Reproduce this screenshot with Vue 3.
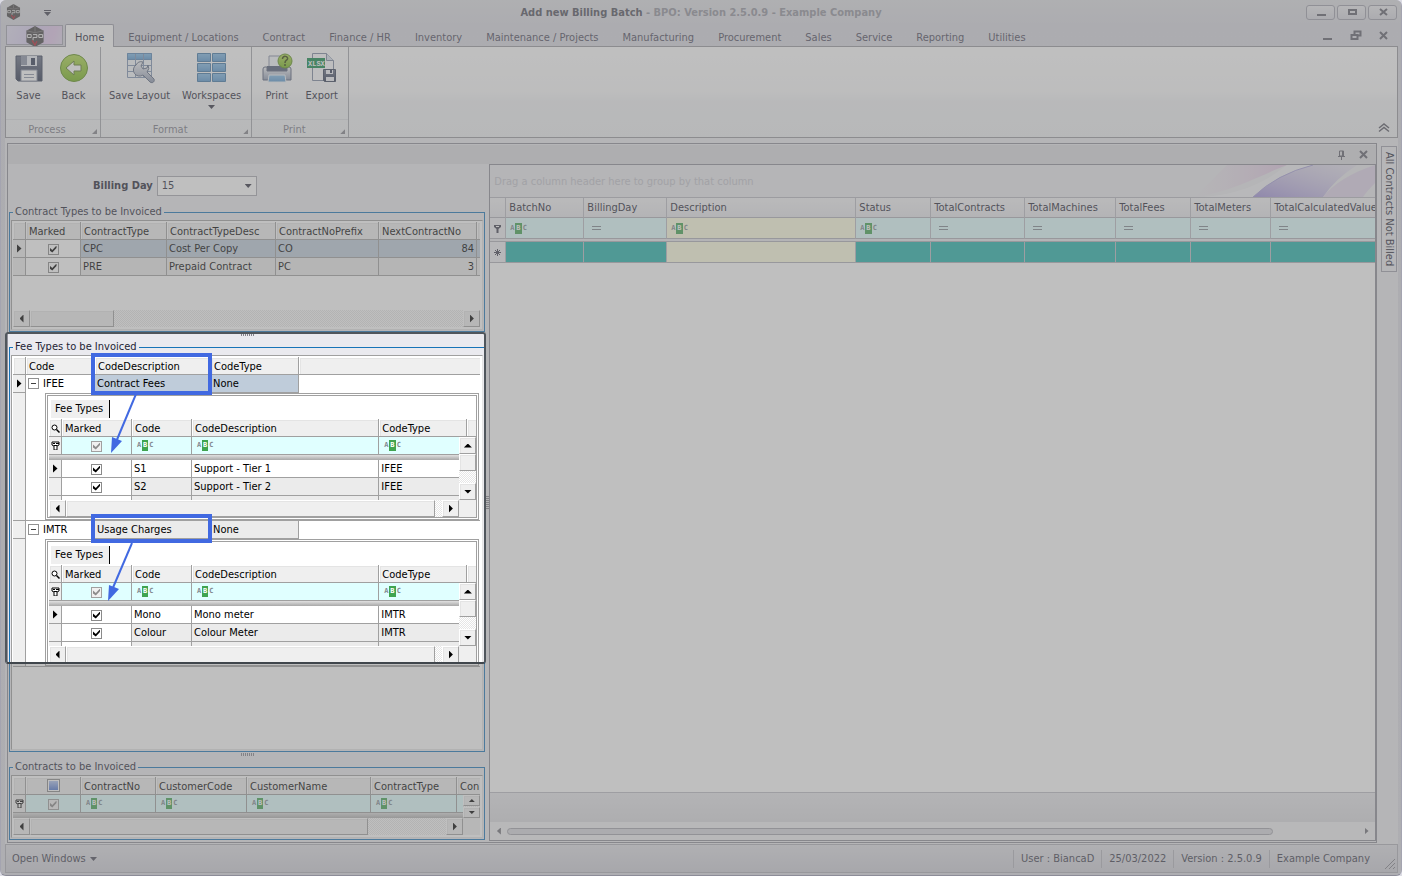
<script setup>
import { ref } from 'vue'

const menuTabs = ['Home', 'Equipment / Locations', 'Contract', 'Finance / HR', 'Inventory', 'Maintenance / Projects', 'Manufacturing', 'Procurement', 'Sales', 'Service', 'Reporting', 'Utilities']
const billingDay = ref('15')

const contractTypes = ref([
  { marked: true, type: 'CPC', desc: 'Cost Per Copy', prefix: 'CO', next: 84 },
  { marked: true, type: 'PRE', desc: 'Prepaid Contract', prefix: 'PC', next: 3 },
])

const feeGroups = ref([
  {
    code: 'IFEE', desc: 'Contract Fees', type: 'None',
    fees: [
      { marked: true, code: 'S1', desc: 'Support - Tier 1', type: 'IFEE' },
      { marked: true, code: 'S2', desc: 'Support - Tier 2', type: 'IFEE' },
      { marked: true, code: '', desc: 'Off-season usage and', type: '' },
    ],
  },
  {
    code: 'IMTR', desc: 'Usage Charges', type: 'None',
    fees: [
      { marked: true, code: 'Mono', desc: 'Mono meter', type: 'IMTR' },
      { marked: true, code: 'Colour', desc: 'Colour Meter', type: 'IMTR' },
      { marked: true, code: '', desc: '', type: '' },
    ],
  },
])

const batchColumns = [
  { name: 'BatchNo', kind: 'text' },
  { name: 'BillingDay', kind: 'number' },
  { name: 'Description', kind: 'text' },
  { name: 'Status', kind: 'text' },
  { name: 'TotalContracts', kind: 'number' },
  { name: 'TotalMachines', kind: 'number' },
  { name: 'TotalFees', kind: 'number' },
  { name: 'TotalMeters', kind: 'number' },
  { name: 'TotalCalculatedValue', kind: 'number' },
]
</script>

<template>
  <div class="window">
    <svg class="defs" width="0" height="0" aria-hidden="true">
      <defs>
        <linearGradient id="slate" x1="0" y1="0" x2="0" y2="1"><stop offset="0" stop-color="#6a7288" /><stop offset="1" stop-color="#2c3650" /></linearGradient>
        <linearGradient id="green" x1="0" y1="0" x2="0" y2="1"><stop offset="0" stop-color="#b4dc50" /><stop offset="1" stop-color="#74b418" /></linearGradient>
        <linearGradient id="blue" x1="0" y1="0" x2="0" y2="1"><stop offset="0" stop-color="#84bce8" /><stop offset="1" stop-color="#5898d0" /></linearGradient>
        <linearGradient id="steel" x1="0" y1="0" x2="0" y2="1"><stop offset="0" stop-color="#f4f6fa" /><stop offset="1" stop-color="#8c98b0" /></linearGradient>
        <linearGradient id="petal" x1="0" y1="1" x2="1" y2="0"><stop offset="0" stop-color="#a090d8" /><stop offset="1" stop-color="#dcd4ec" stop-opacity=".4" /></linearGradient>
        <linearGradient id="blush" x1="0" y1="0" x2="1" y2="0"><stop offset="0" stop-color="#ecd0e8" stop-opacity="0" /><stop offset="1" stop-color="#e0b8e0" stop-opacity=".7" /></linearGradient>
        <symbol id="logo" viewBox="0 0 20 22">
          <path d="M10 0 19 5v12l-9 5-9-5V5z" fill="#484648" />
          <path d="M10 0v6M1 5l9 2 9-2" stroke="#7a787a" fill="none" />
          <path d="M2 9h4v3H2zM8 9h4v3H8v3M14 9h4v3h-4z" fill="none" stroke="#f4f4f4" />
          <path d="m7 15 3 5 2-4" stroke="#c02030" stroke-width="1.4" fill="none" />
        </symbol>
      </defs>
    </svg>

    <header class="titlebar">
      <svg class="logo-small" width="15" height="16"><use href="#logo" /></svg>
      <button class="quick" aria-label="Customize quick access"><svg width="9" height="7"><path d="M1 1.500h7" stroke="#404050" /><path d="M1 3h7L4.500 7z" fill="#404050" /></svg></button>
      <h1>Add new Billing Batch <span>- BPO: Version 2.5.0.9 - Example Company</span></h1>
      <div class="caption-buttons">
        <button aria-label="Minimize"><svg width="14" height="10"><path d="M3 8h9" stroke="#60606c" stroke-width="2" /></svg></button>
        <button aria-label="Maximize"><svg width="14" height="10"><path d="M4 3h7v4H4z" stroke="#60606c" stroke-width="2" fill="none" /></svg></button>
        <button aria-label="Close"><svg width="14" height="10"><path d="m4 2 7 6m0-6-7 6" stroke="#60606c" stroke-width="2" /></svg></button>
      </div>
    </header>

    <nav class="tabs">
      <button class="app-button" aria-label="Application menu"><svg width="20" height="21"><use href="#logo" /></svg></button>
      <a v-for="(tab, i) in menuTabs" :key="tab" href="#" :class="{ active: i === 0 }">{{ tab }}</a>
      <div class="mdi-buttons">
        <button aria-label="Minimize child"><svg width="12" height="11"><path d="M1 9h9" stroke="#60606c" stroke-width="2" /></svg></button>
        <button aria-label="Restore child"><svg width="12" height="11"><path d="M4.500 4V1.500h6v4H8M1.500 5h6v4h-6z" stroke="#60606c" stroke-width="2" fill="none" /></svg></button>
        <button aria-label="Close child"><svg width="12" height="11"><path d="m2 2 7 7m0-7-7 7" stroke="#60606c" stroke-width="2" /></svg></button>
      </div>
    </nav>

    <section class="ribbon">
      <div class="ribbon-group process">
        <div class="tools">
          <button class="tool">
            <svg width="32" height="32"><path d="M3 4h26v25H5l-2-2z" fill="url(#slate)" stroke="#38425a" /><path d="M8 4h16v10H8z" fill="#e8ecf4" /><path d="M8 4h6v9H8z" fill="#8c94a8" /><path d="M18 6h4v7h-4z" fill="#303a54" /><path d="M8 18h16v11H8z" fill="#fff" stroke="#8890a4" /><path d="M11 22.500h10M11 25.500h10" stroke="#8c94a8" /></svg>
            <span>Save</span>
          </button>
          <button class="tool">
            <svg width="32" height="32"><circle cx="16" cy="16" r="13.500" fill="url(#green)" stroke="#5c9018" /><path d="m8 16 8-7v4h7v6h-7v4z" fill="#fff" stroke="#5c7c28" /></svg>
            <span>Back</span>
          </button>
        </div>
        <footer>Process<i></i></footer>
      </div>
      <div class="ribbon-group format">
        <div class="tools">
          <button class="tool">
            <svg width="32" height="32"><path d="M3.500 1.500h24v24h-24z" fill="#f4f8fc" stroke="#8094b4" /><path d="M3.500 1.500h24v6h-24z" fill="url(#blue)" stroke="#5888b8" /><path d="M3 13.500h24M3 19.500h24M11.500 2v24M19.500 2v24" stroke="#8094b4" /><path d="M12 13a6 6 0 0 1 7-3l-2 4 2 3 4-1 1-3a6 6 0 0 1-1 7l7 7c1 2-1 5-4 3l-7-7a6 6 0 0 1-7-10z" fill="url(#steel)" stroke="#606c84" /></svg>
            <span>Save Layout</span>
          </button>
          <button class="tool">
            <svg width="32" height="32"><g fill="url(#blue)" stroke="#4078a8"><path d="M1.500 1.500h13v8h-13zM16.500 1.500h13v8h-13z" /><path d="M1.500 11.500h13v8h-13zM16.500 11.500h13v8h-13z" /><path d="M1.500 21.500h13v8h-13zM16.500 21.500h13v8h-13z" /></g></svg>
            <span>Workspaces</span>
            <svg class="drop" width="7" height="4"><path d="M0 0h7L3.500 4z" fill="#303040" /></svg>
          </button>
        </div>
        <footer>Format<i></i></footer>
      </div>
      <div class="ribbon-group print">
        <div class="tools">
          <button class="tool">
            <svg width="32" height="32"><path d="M8 4h14l2 2v12H8z" fill="#f4f8fc" stroke="#8890a8" /><path d="M6 14h20v5H6z" fill="#505c78" /><path d="M2 17q0-2 2-2h2v4h20v-4h2q2 0 2 2v11H2z" fill="url(#steel)" stroke="#58627c" /><path d="M8 23h16l1 7H7z" fill="url(#blue)" stroke="#f0f4f8" /><circle cx="24" cy="9" r="7" fill="url(#green)" stroke="#5c9018" /><path d="M21.500 7c0-4 6-3 5 0-1 2-2.500 1-2.500 4m0 1v2" fill="none" stroke="#304008" stroke-width="1.500" /></svg>
            <span>Print</span>
          </button>
          <button class="tool">
            <svg width="32" height="32"><path d="M6.500 1.500h14l7 7v20h-21z" fill="#fcfcfe" stroke="#7c88a0" /><path d="M20.500 1.500v7h7" fill="#d8e0ec" stroke="#7c88a0" /><path d="M1 6h18v10H1z" fill="#108848" /><text x="2" y="14" class="xlsx">XLSX</text><path d="M17.500 17.500h12v12h-11l-1-1z" fill="url(#slate)" stroke="#38425a" /><path d="M20 18h7v4h-7zM20 25h8v4h-8z" fill="#f0f2f8" /><path d="M24 18h2v3h-2z" fill="#303a54" /></svg>
            <span>Export</span>
          </button>
        </div>
        <footer>Print<i></i></footer>
      </div>
      <button class="collapse" aria-label="Collapse ribbon"><svg width="14" height="11"><path d="m2 6 5-4 5 4M2 9.500l5-4 5 4" fill="none" stroke="#585864" stroke-width="1.500" /></svg></button>
    </section>

    <div class="workspace">
      <main class="dock">
        <div class="dock-header">
          <button aria-label="Pin panel"><svg width="9" height="10"><path d="M2.500 1v5h4V1zM1 6.500h7M4.500 6v4" fill="none" stroke="#60606c" /><path d="M5 1h2v5H5z" fill="#60606c" /></svg></button>
          <button aria-label="Close panel"><svg width="10" height="9"><path d="m1 1 7 7m0-7-7 7" stroke="#60606c" stroke-width="2" /></svg></button>
        </div>
        <div class="split">
          <div class="left">
            <div class="billing">
              <label for="day">Billing Day</label>
              <span class="combo"><select id="day" v-model="billingDay"><option>15</option></select></span>
            </div>

            <fieldset>
              <legend>Contract Types to be Invoiced</legend>
              <div class="box">
                <table class="classic">
                  <colgroup><col class="w13"><col class="w55"><col class="w86"><col class="w109"><col class="w103"><col class="w98"><col></colgroup>
                  <thead><tr><th></th><th>Marked</th><th>ContractType</th><th>ContractTypeDesc</th><th>ContractNoPrefix</th><th>NextContractNo</th><th></th></tr></thead>
                  <tbody>
                    <tr v-for="(row, i) in contractTypes" :key="row.type" :class="i === 0 ? 'selected' : 'shade'">
                      <td class="ind"><i v-if="i === 0" class="current"></i></td>
                      <td class="tick"><input v-model="row.marked" type="checkbox" :aria-label="'Mark ' + row.type"></td>
                      <td>{{ row.type }}</td><td>{{ row.desc }}</td><td>{{ row.prefix }}</td><td class="num">{{ row.next }}</td><td></td>
                    </tr>
                  </tbody>
                </table>
                <div class="blank"></div>
                <div class="hscroll"><button class="arr l" aria-label="Scroll left"></button><b class="thumb short"></b><s></s><button class="arr r" aria-label="Scroll right"></button></div>
              </div>
            </fieldset>

            <div class="grip"></div>

            <fieldset class="fees">
              <legend>Fee Types to be Invoiced</legend>
              <div class="box">
                <table class="classic master">
                  <colgroup><col class="w13"><col class="w69"><col class="w116"><col class="w88"><col></colgroup>
                  <thead><tr><th></th><th>Code</th><th>CodeDescription</th><th>CodeType</th><th></th></tr></thead>
                  <tbody v-for="(group, g) in feeGroups" :key="group.code">
                    <tr :class="g === 0 ? 'selected' : 'shade'">
                      <td class="ind"><i v-if="g === 0" class="current"></i></td>
                      <td class="key"><button class="expander" :aria-label="'Collapse ' + group.code"></button>{{ group.code }}</td>
                      <td>{{ group.desc }}</td><td>{{ group.type }}</td><td class="rest"></td>
                    </tr>
                    <tr class="detail">
                      <td class="ind"></td>
                      <td colspan="4">
                        <div class="nested">
                          <button class="sheet">Fee Types</button>
                          <div class="clip">
                            <table class="classic">
                              <colgroup><col class="w13"><col class="w70"><col class="w60"><col><col class="w88"><col class="w9"></colgroup>
                              <thead><tr>
                                <th><svg width="9" height="9"><circle cx="3.500" cy="3.500" r="2.500" fill="#fff" stroke="#000" /><path d="m5.500 5.500 3 3" stroke="#000" stroke-width="1.500" /></svg></th>
                                <th>Marked</th><th>Code</th><th>CodeDescription</th><th>CodeType</th><th></th>
                              </tr></thead>
                              <tbody>
                                <tr class="filter">
                                  <td class="ind"><svg width="9" height="9"><path d="M1 1h7v3L6 5v4H3V5L1 4z" fill="#fff" stroke="#000" /><path d="M2 2.500h2m1 0h3M3 4.500h3" stroke="#000" /></svg></td>
                                  <td class="tick"><input type="checkbox" checked disabled aria-label="Filter marked"></td>
                                  <td><span class="abc"><i>A</i><b>B</b><i>C</i></span></td>
                                  <td><span class="abc"><i>A</i><b>B</b><i>C</i></span></td>
                                  <td><span class="abc"><i>A</i><b>B</b><i>C</i></span></td>
                                  <td></td>
                                </tr>
                                <tr class="bar"><td colspan="6"></td></tr>
                                <tr v-for="(fee, f) in group.fees" :key="f" :class="{ shade: f > 0 }">
                                  <td class="ind"><i v-if="f === 0" class="current"></i></td>
                                  <td class="tick"><input v-model="fee.marked" type="checkbox" :aria-label="'Mark fee ' + fee.code"></td>
                                  <td>{{ fee.code }}</td><td>{{ fee.desc }}</td><td>{{ fee.type }}</td><td></td>
                                </tr>
                              </tbody>
                            </table>
                            <div class="vscroll"><button class="arr u" aria-label="Scroll up"></button><b class="thumb"></b><s></s><button class="arr d" aria-label="Scroll down"></button></div>
                          </div>
                          <div class="hscroll inset"><button class="arr l" aria-label="Scroll left"></button><b class="thumb wide"></b><s></s><button class="arr r" aria-label="Scroll right"></button></div>
                        </div>
                      </td>
                    </tr>
                  </tbody>
                </table>
              </div>
            </fieldset>

            <div class="grip"></div>

            <fieldset>
              <legend>Contracts to be Invoiced</legend>
              <div class="box">
                <div class="clip-contracts">
                  <table class="classic">
                    <colgroup><col class="w13"><col class="w55"><col class="w75"><col class="w91"><col class="w124"><col class="w86"><col></colgroup>
                    <thead><tr><th></th><th class="tick"><i class="allbox"></i></th><th>ContractNo</th><th>CustomerCode</th><th>CustomerName</th><th>ContractType</th><th>Con</th></tr></thead>
                    <tbody>
                      <tr class="filter">
                        <td class="ind"><svg width="9" height="9"><path d="M1 1h7v3L6 5v4H3V5L1 4z" fill="#fff" stroke="#000" /><path d="M2 2.500h2m1 0h3M3 4.500h3" stroke="#000" /></svg></td>
                        <td class="tick"><input type="checkbox" checked disabled aria-label="Filter marked contracts"></td>
                        <td v-for="n in 4" :key="n"><span class="abc"><i>A</i><b>B</b><i>C</i></span></td>
                        <td></td>
                      </tr>
                      <tr class="bar"><td colspan="7"></td></tr>
                    </tbody>
                  </table>
                  <div class="vscroll mini"><button class="arr u" aria-label="Scroll up"></button><button class="arr d" aria-label="Scroll down"></button></div>
                </div>
                <div class="hscroll inset"><button class="arr l" aria-label="Scroll left"></button><b class="thumb contracts"></b><s></s><button class="arr r" aria-label="Scroll right"></button></div>
              </div>
            </fieldset>

            <div class="spotlight"></div>
            <div class="mark first"></div>
            <div class="mark second"></div>
            <svg class="pointer p1" width="40" height="64"><path d="M30 0 10 48" stroke="#4169e1" stroke-width="2" /><path d="m5 59 1-16 10 4z" fill="#4169e1" /></svg>
            <svg class="pointer p2" width="40" height="64"><path d="M29 0 9 47" stroke="#4169e1" stroke-width="2" /><path d="m5 58 1-16 10 4z" fill="#4169e1" /></svg>
          </div>

          <div class="vgrip"></div>

          <div class="right">
            <div class="group-by">
              <span>Drag a column header here to group by that column</span>
              <svg width="210" height="32" viewBox="0 0 210 32" preserveAspectRatio="none"><path d="M30 32C70 26 100 8 122 0h-60z" fill="url(#blush)" /><path d="M38 32C90 28 110 8 122 0h26Q110 14 88 32z" fill="#fff" opacity=".35" /><path d="M88 32Q112 9 148 0h44q-22 14-34 32z" fill="url(#petal)" /><path d="M88 32Q112 9 148 0" fill="none" stroke="#a8a0d8" /><path d="M158 32Q174 12 210 0v18q-8 8-12 14z" fill="#dccce8" opacity=".7" /></svg>
            </div>
            <table class="batches">
              <colgroup><col class="w16"><col class="w78"><col class="w83"><col class="w189"><col class="w75"><col class="w94"><col class="w91"><col class="w75"><col class="w80"><col></colgroup>
              <thead><tr><th></th><th v-for="c in batchColumns" :key="c.name">{{ c.name }}</th></tr></thead>
              <tbody>
                <tr class="filter">
                  <td class="ind"><svg width="7" height="9"><path d="M0 1h7v2L4.500 5v4h-2V5L0 3z" fill="#404050" /><path d="M2 2.500h3" stroke="#fff" /></svg></td>
                  <td v-for="c in batchColumns" :key="c.name" :class="{ cream: c.name === 'Description' }">
                    <span v-if="c.kind === 'text'" class="abc"><i>A</i><b>B</b><i>C</i></span>
                    <i v-else class="equals"></i>
                  </td>
                </tr>
                <tr class="gap"><td colspan="10"></td></tr>
                <tr class="new">
                  <td class="ind"><svg width="7" height="7"><path d="M3.500 0v7M0 3.500h7M1 1l5 5M6 1 1 6" stroke="#404050" /></svg></td>
                  <td v-for="c in batchColumns" :key="c.name" :class="{ cream: c.name === 'Description' }"></td>
                </tr>
              </tbody>
            </table>
            <div class="empty"></div>
            <div class="summary"></div>
            <div class="slim"><button class="l" aria-label="Scroll left"></button><div class="rail"><b></b></div><button class="r" aria-label="Scroll right"></button></div>
          </div>
        </div>
      </main>
      <aside><button>All Contracts Not Billed</button></aside>
    </div>

    <footer class="status">
      <button>Open Windows <svg width="7" height="4"><path d="M0 0h7L3.500 4z" fill="#484858" /></svg></button>
      <span>User : BiancaD</span><span>25/03/2022</span><span>Version : 2.5.0.9</span><span>Example Company</span>
      <svg class="resize" width="12" height="12"><path d="M1 11 11 1M5 11l6-6M9 11l2-2" stroke="#84848c" /></svg>
    </footer>
  </div>
</template>

<style>
html, body, #app { height: 100%; }
body { margin: 0; background: #dcdce4; }
</style>

<style scoped>
* { box-sizing: border-box; }
.window { position: relative; height: 100vh; min-height: 600px; display: flex; flex-direction: column; overflow: hidden; padding: 0 3px 2px 4px; background: linear-gradient(#dfe0e4, #d9d9e1 24px, #dcdce4); color: #242434; font: 11px/14px "DejaVu Sans Condensed", "DejaVu Sans", sans-serif; border-left: 1px solid #a4a4b0; border-right: 1px solid #a4a4b0; border-bottom: 1px solid #8c8c98; border-radius: 6px; }
.defs { position: absolute; }
button { font: inherit; color: inherit; border: 0; padding: 0; background: none; }
svg { display: block; }
i { font-style: normal; }

.titlebar { height: 24px; flex: none; display: flex; align-items: center; gap: 22px; padding: 0 0 0 1px; }
.titlebar h1 { flex: 1; margin: 0; padding: 1px 0 0 44px; font-size: 11px; line-height: 14px; text-align: center; color: #50505c; }
.titlebar h1 span { color: #94949e; }
.quick { width: 9px; }
.caption-buttons { display: flex; gap: 2px; padding-right: 1px; }
.caption-buttons button { width: 29px; height: 15px; display: grid; place-items: center; border: 1px solid #a0a0ac; border-radius: 3px; background: linear-gradient(#ececf0, #d8d8e0); }

.tabs { height: 22px; flex: none; display: flex; }
.tabs a { padding: 7px 12px 0; color: #4c4a5c; text-decoration: none; white-space: nowrap; }
.tabs a.active { margin-right: 2px; padding: 6px 9px 0; border: 1px solid #9c9ca8; border-bottom: 0; border-radius: 2px 2px 0 0; background: #fff; color: #242434; margin-bottom: -1px; z-index: 1; }
.app-button { width: 57px; height: 20px; margin: 1px 2px 1px 1px; display: grid; place-items: center; border: 1px solid #a4a4b0; background: linear-gradient(110deg, #e4e0f4, #d8ccf0 50%, #e4c8ec 80%, #e0d8ec); }
.mdi-buttons { margin-left: auto; display: flex; gap: 16px; padding: 6px 8px 0 0; align-items: flex-start; }

.ribbon { flex: none; display: flex; height: 92px; border: 1px solid #98989f; background: linear-gradient(#fff, #fafafb 50%, #f2f3f5 60%, #eff1f3); }
.ribbon-group { display: flex; flex-direction: column; border-right: 1px solid #a4a6ac; }
.tools { flex: 1; display: flex; padding: 5px 4px 0 0; }
.tool { display: flex; flex-direction: column; align-items: center; padding: 0 6px; min-width: 45px; white-space: nowrap; }
.tool span { margin-top: 5px; }
.tool .drop { margin-top: 2px; }
.format .tools, .print .tools { padding-left: 2px; }
.ribbon-group footer { position: relative; height: 18px; padding: 3px 12px 0 0; text-align: center; color: #7c7c88; border-top: 1px solid #dcdee2; }
.ribbon-group footer i { position: absolute; right: 3px; bottom: 3px; width: 5px; height: 5px; background: #84848c; clip-path: polygon(100% 0, 100% 100%, 0 100%); }
.xlsx { font: bold 7px "Liberation Mono", monospace; fill: #fff; }
.collapse { margin: auto 6px 4px auto; }

.workspace { flex: 1; min-height: 0; display: flex; padding: 5px 0 1px 2px; background: #eaeaef; }
.dock { flex: 1; min-width: 0; display: flex; flex-direction: column; border: 1px solid #8e8e98; padding: 1px 0 1px 0; background: #eaeaef; }
.dock-header { height: 19px; flex: none; display: flex; justify-content: flex-end; align-items: center; gap: 13px; padding-right: 7px; background: #dcdce0; }
.split { flex: 1; min-height: 0; display: grid; grid-template-columns: minmax(0, 477fr) 4px minmax(0, 886fr); }
.left { position: relative; display: flex; flex-direction: column; padding: 12px 0 1px 1px; }
.billing { display: flex; align-items: center; height: 20px; margin: 0 0 9px 84px; gap: 4px; flex: none; }
.billing label { font-weight: bold; }
.combo { position: relative; }
.combo::after { content: ""; position: absolute; right: 5px; top: 8px; width: 7px; height: 4px; background: #303040; clip-path: polygon(0 0, 100% 0, 50% 100%); pointer-events: none; }
.combo select { display: block; appearance: none; width: 100px; height: 20px; padding: 0 4px; border: 1px solid #a8a8b0; border-radius: 0; background: #fff; color: #242434; font: inherit; }

fieldset { flex: none; min-width: 0; margin: 0; padding: 1px; border: 1px solid #1874b8; display: flex; flex-direction: column; }
legend { margin-left: 2px; padding: 0 2px; line-height: 14px; color: #242434; }
.fees { flex: 1; min-height: 0; }
.box { flex: 1; min-height: 0; display: flex; flex-direction: column; padding: 1px 2px 2px 1px; border: 1px solid #a0a0a0; border-right-color: #e4e4e4; border-bottom-color: #e4e4e4; background: #fff; }
.grip { height: 8px; flex: none; background: repeating-linear-gradient(90deg, #84848c 0 1px, transparent 1px 2px) center 1px / 13px 3px no-repeat; }
.vgrip { background: repeating-linear-gradient(#84848c 0 1px, transparent 1px 2px) 1px center / 3px 13px no-repeat; }

.w9 { width: 9px; }
.w13 { width: 13px; }
.w16 { width: 16px; }
.w55 { width: 55px; }
.w60 { width: 60px; }
.w69 { width: 69px; }
.w70 { width: 70px; }
.w75 { width: 75px; }
.w78 { width: 78px; }
.w80 { width: 80px; }
.w83 { width: 83px; }
.w86 { width: 86px; }
.w88 { width: 88px; }
.w91 { width: 91px; }
.w94 { width: 94px; }
.w98 { width: 98px; }
.w103 { width: 103px; }
.w109 { width: 109px; }
.w116 { width: 116px; }
.w124 { width: 124px; }
.w189 { width: 189px; }

table { border-collapse: separate; border-spacing: 0; table-layout: fixed; width: 100%; }
th { font-weight: normal; text-align: left; }
th, td { padding: 0; white-space: nowrap; overflow: hidden; }
.classic { color: #000; }
.classic th, .classic td { height: 18px; border-right: 1px solid #a0a0a0; border-bottom: 1px solid #a0a0a0; padding-left: 3px; }
.classic th { background: #efefef; box-shadow: inset 1px 1px #fff, inset 2px 2px #e4e4e4; padding: 2px 0 0 3px; }
.classic th:last-child, .classic td:last-child { border-right: 0; }
.classic td { padding-left: 2px; }
.classic td.ind, .batches td.ind { padding: 0; background: #efefef; }
.classic th:first-child { padding-left: 2px; }
.classic td.ind svg { margin: auto; }
.classic .tick { text-align: center; padding: 0; background: #fff; }
.classic th.tick { background: #efefef; }
.classic td.num { text-align: right; padding-right: 2px; }
.shade td { background: #ebebeb; }
.selected td { background: #bfccda; }
.shade .key, .selected .key, .shade .rest, .selected .rest { background: #fff; border-bottom-color: #fff; }
.classic .key { border-right-color: #fff; }
.expander { position: relative; float: left; width: 11px; height: 11px; margin: 1px 4px 0 0; border: 1px solid #909090; background: #fff; }
.expander::after { content: ""; position: absolute; left: 2px; top: 4px; width: 5px; height: 1px; background: #404040; }
.current { display: block; width: 5px; height: 9px; margin: auto; background: #000; clip-path: polygon(0 0, 100% 50%, 0 100%); }
input[type="checkbox"] { appearance: none; position: relative; display: block; width: 11px; height: 11px; margin: 1px auto 0; border: 1px solid #8a8a8a; background: #fff; }
input[type="checkbox"]:checked::after { content: ""; position: absolute; left: 1px; top: 1px; width: 7px; height: 7px; background: #000; clip-path: polygon(0 30%, 40% 65%, 100% 0, 100% 35%, 40% 100%, 0 70%); }
input[type="checkbox"]:disabled { background: #f0f0f0; border-color: #a0a0a0; }
input[type="checkbox"]:disabled::after { background: #8c8c8c; }
.allbox { display: block; width: 13px; height: 13px; margin: 0 auto; border: 1px solid #8a8a8a; background: linear-gradient(#b0c4f0, #5078d0) center / 9px 9px no-repeat #fff; }
.filter td { background: #e0ffff; }
.classic .filter td { padding-left: 5px; }
.classic .filter .ind, .classic .filter .tick { padding: 0; }
.classic .filter .tick { background: #e0ffff; }
.classic .bar td { height: 5px; padding: 0; border: 0; background: linear-gradient(#dcdcdc, #b0b0b0); line-height: 0; }
.abc { display: flex; align-items: center; width: 17px; height: 11px; font: bold 7px/11px "DejaVu Sans Mono", monospace; color: #808890; }
.abc i { width: 5px; }
.abc b { width: 7px; margin-right: 1px; text-align: center; background: #40a450; color: #fff; }

.master .detail td { height: 128px; vertical-align: top; padding: 0; background: #fff; }
.master .detail > td.ind { background: #efefef; }
.nested { margin: 0 1px 0 19px; border: 3px double #a0a0a0; padding: 4px 0 0 1px; background: #fff; }
.sheet { display: block; height: 18px; margin: 0 0 1px 2px; padding: 0 6px 0 4px; background: #efefef; border-right: 1px solid #000; }
.clip { position: relative; height: 81px; overflow: hidden; }
.nested .classic th, .nested .classic td { height: 18px; vertical-align: middle; }
.nested .classic td { padding-left: 2px; background: #fff; }
.nested .classic .shade td { background: #ebebeb; }
.nested .classic .shade .tick { background: #fff; }
.nested .classic td.ind { padding: 0; background: #efefef; }
.nested .classic .filter td { background: #e0ffff; padding-left: 5px; }
.nested .classic .filter td.ind { background: #efefef; padding: 0; }
.nested .classic .filter td.tick { padding: 0; }
.nested .classic .bar td { height: 5px; background: linear-gradient(#e0e0e0, #a8a8a8); }
.nested .classic td.tick { padding: 0; }

.blank { height: 34px; }
.hscroll, .vscroll { display: flex; flex: none; background: repeating-conic-gradient(#e6e6e6 0 25%, #fff 0 50%) 0 0 / 2px 2px; }
.hscroll { height: 17px; }
.inset { margin-right: 17px; box-shadow: 17px 0 #efefef; }
.vscroll { position: absolute; right: 0; top: 18px; bottom: 0; width: 17px; flex-direction: column; }
.hscroll s, .vscroll s { flex: 1; }
.arr, .thumb { flex: none; background: #efefef; border: 1px solid #fff; border-right-color: #a0a0a0; border-bottom-color: #a0a0a0; box-shadow: inset 1px 1px #e4e4e4; }
.arr { width: 17px; height: 17px; display: grid; place-items: center; }
.arr::after { content: ""; background: #000; width: 8px; height: 4px; }
.arr.l::after, .arr.r::after { width: 4px; height: 8px; }
.l::after { clip-path: polygon(100% 0, 100% 100%, 0 50%); }
.r::after { clip-path: polygon(0 0, 100% 50%, 0 100%); }
.arr.u::after { clip-path: polygon(50% 0, 100% 100%, 0 100%); }
.arr.d::after { clip-path: polygon(0 0, 100% 0, 50% 100%); }
.vscroll .thumb { height: 17px; }
.thumb.short { width: 18%; }
.thumb.wide { width: 90%; }
.thumb.contracts { width: 75%; }
.clip-contracts { position: relative; }
.mini .arr { height: 11px; }
.mini { justify-content: space-between; }
.mini .arr::after { width: 6px; height: 3px; }

.spotlight { position: absolute; z-index: 2; left: -3px; right: -1px; top: 168px; height: 332px; border: 2px solid #50565c; border-bottom-color: #40464c; border-radius: 3px; box-shadow: 0 0 0 3000px rgba(128, 128, 128, .5); pointer-events: none; }
.mark { position: absolute; z-index: 3; left: 83px; width: 121px; border: 4px solid #4169e1; pointer-events: none; }
.mark.first { top: 189px; height: 42px; }
.mark.second { top: 350px; height: 29px; }
.pointer { position: absolute; z-index: 3; pointer-events: none; }
.p1 { left: 98px; top: 230px; }
.p2 { left: 95px; top: 379px; }

.right { display: flex; flex-direction: column; min-height: 0; border: 1px solid #8e8e98; background: #fff; }
.group-by { height: 33px; flex: none; display: flex; justify-content: space-between; background: #eaeaee; border-bottom: 1px solid #b8b8c0; }
.group-by span { padding: 10px 0 0 4px; color: #c4c4cc; }
.batches { flex: none; }
.batches th, .batches td { height: 21px; border-right: 1px solid #bcbcc4; border-bottom: 1px solid #b0b0b8; }
.batches th { height: 20px; padding-left: 3px; background: linear-gradient(#f4f4f6, #e8e8ec); }
.batches th:last-child, .batches td:last-child { border-right: 0; }
.batches td { padding-left: 4px; }
.batches td svg { margin: auto; }
.batches .gap td { height: 3px; padding: 0; background: #e8e8ec; line-height: 0; }
.batches .new td { background: #20b2aa; }
.batches .cream, .batches .new .cream { background: #ffffe0; }
.batches .new td.ind, .batches .filter td.ind { background: #efeff2; }
.equals { display: block; width: 9px; height: 4px; margin-left: 4px; border: 1px solid #808890; border-width: 1px 0; }
.empty { flex: 1; }
.summary { height: 30px; flex: none; border-top: 1px solid #bcbcc4; background: linear-gradient(#e8e8ec, #dcdce0); }
.slim { height: 18px; flex: none; display: flex; align-items: center; background: #f0f0f3; }
.slim button { width: 17px; height: 17px; display: grid; place-items: center; }
.slim button::after { content: ""; width: 4px; height: 7px; background: #707078; }
.rail { flex: 1; }
.rail b { display: block; width: 90%; height: 7px; border: 1px solid #a4a4ac; border-radius: 4px; background: #d8d8de; }

aside { width: 21px; flex: none; padding: 3px 1px 0 4px; }
aside button { width: 16px; height: 126px; writing-mode: vertical-rl; border: 1px solid #a0a0ac; background: #ececf0; white-space: nowrap; }
.status { height: 29px; flex: none; display: flex; align-items: center; border: 1px solid #b0b0b8; background: linear-gradient(#e0e0e6, #cfcfd7); color: #3c3c4c; }
.status button { margin-right: auto; padding-left: 6px; display: flex; align-items: center; gap: 4px; }
.status span { padding: 0 7px; border-left: 1px solid #b4b4bc; line-height: 18px; }
.resize { margin: 10px 1px 0 7px; }
</style>
